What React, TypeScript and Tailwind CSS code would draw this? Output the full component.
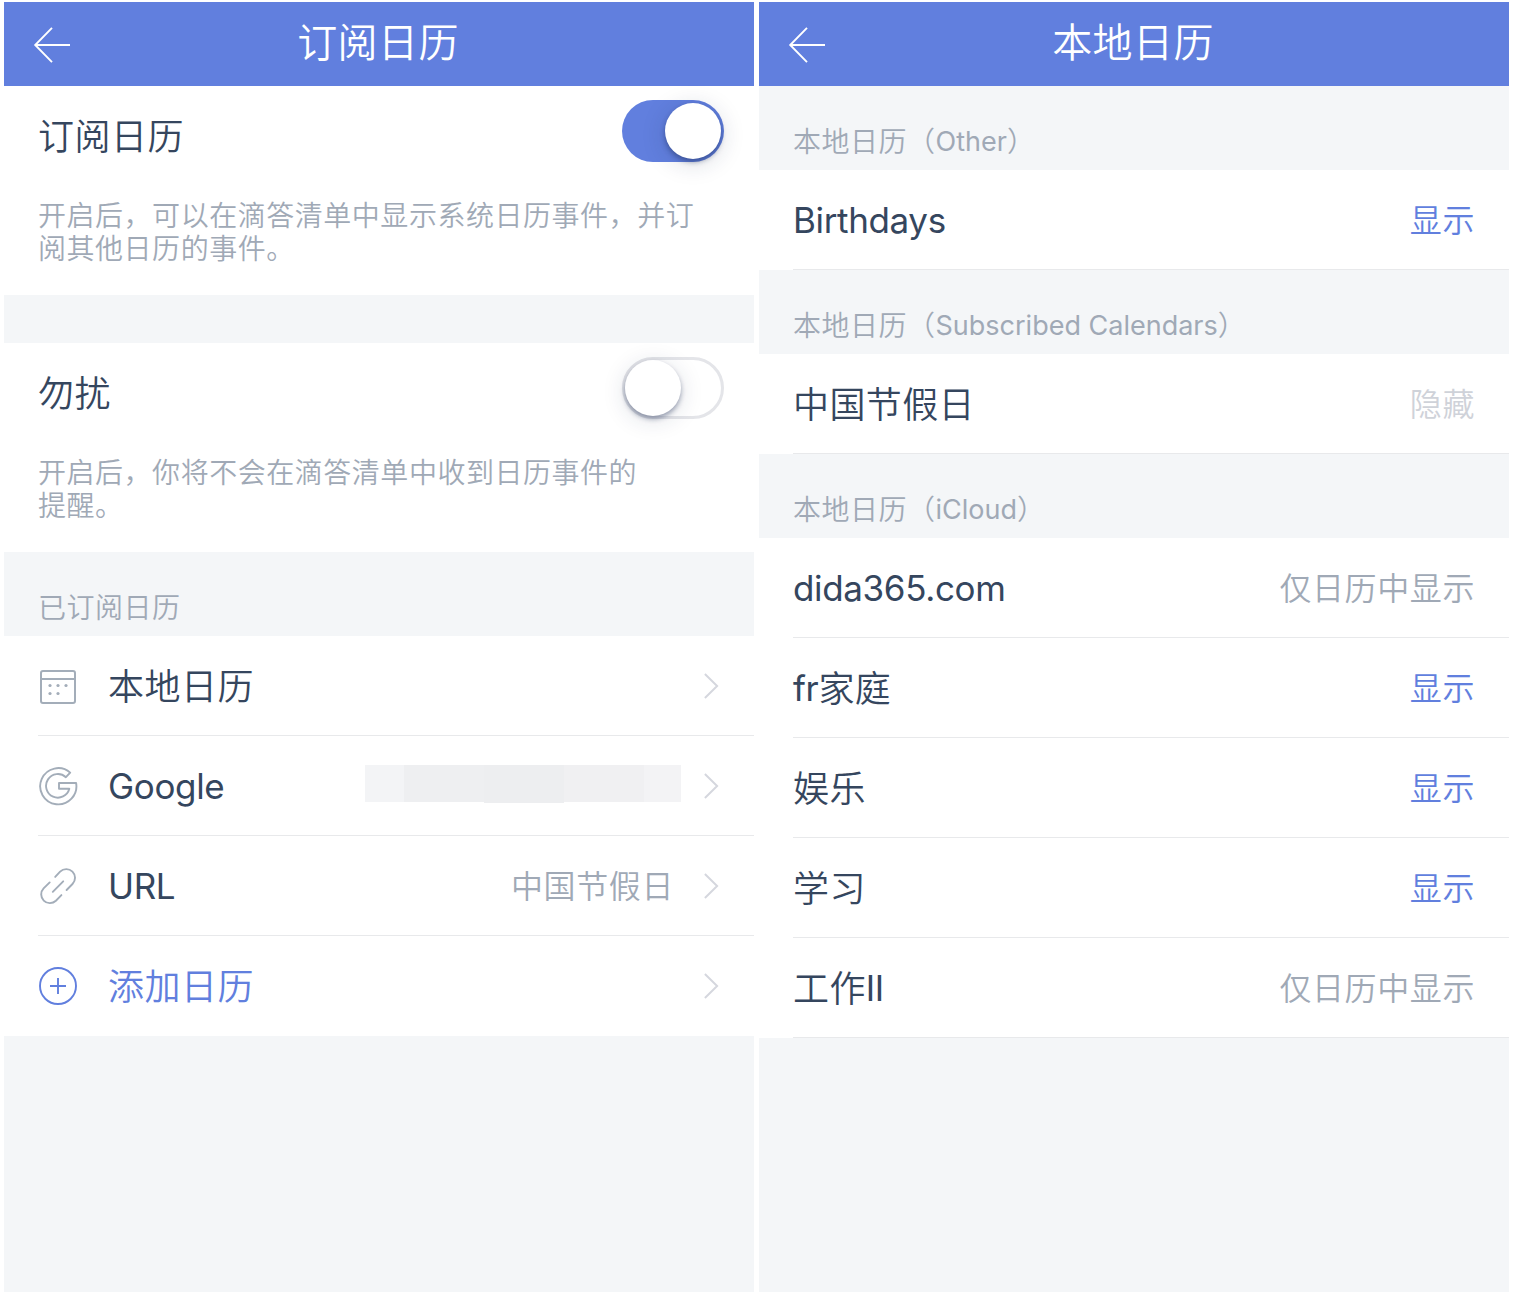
import type { ReactNode } from "react";

function BackArrow() {
  return (
    <svg className="block h-[38px] w-[38px]" viewBox="0 0 38 38" fill="none" stroke="#fff" strokeWidth="1.9">
      <path d="M19 1.8 2.2 19 19 36.2M2 19H37" />
    </svg>
  );
}

function Header({ title }: { title: string }) {
  return (
    <header className="grid h-[84px] shrink-0 grid-cols-[72px_1fr_72px] items-center bg-[#617fde] pl-[29px] pr-[31px] text-white">
      <div className="pt-[2px]">
        <BackArrow />
      </div>
      <h1 className="pb-[2px] text-center text-[40px] leading-[60px] tracking-[0.4px] font-[350]">{title}</h1>
    </header>
  );
}

function Toggle({ on }: { on: boolean }) {
  return on ? (
    <div className="flex h-[62px] w-[102px] justify-end rounded-full bg-[#617fde] p-[3px]">
      <div className="size-14 rounded-full bg-white shadow-[0_3px_5px_rgba(25,40,80,0.42),0_4px_24px_rgba(25,40,80,0.18)]" />
    </div>
  ) : (
    <div className="flex h-[62px] w-[102px] rounded-full border-[3px] border-[#e4e5e9] bg-white">
      <div className="size-14 rounded-full bg-white shadow-[0_3px_5px_rgba(25,40,80,0.4),0_4px_24px_rgba(25,40,80,0.14)]" />
    </div>
  );
}

function ToggleSection({ title, on, lines }: { title: string; on: boolean; lines: string[] }) {
  return (
    <section className="h-[209px] bg-white pl-[34px] pr-[30px]">
      <div className="flex h-[100px] items-start justify-between">
        <h2 className="pt-[24px] text-[36px] leading-[54px] tracking-[0.5px] text-[#35465e]">{title}</h2>
        <div className="pt-[14px]">
          <Toggle on={on} />
        </div>
      </div>
      <p className="pt-[14px] text-[28px] leading-[33px] tracking-[0.53px] text-[#a0a9b6]">
        {lines.map((line) => (
          <span key={line} className="block whitespace-nowrap">
            {line}
          </span>
        ))}
      </p>
    </section>
  );
}

/* Latin runs are slightly smaller and tighter than the Chinese text around them. */
function Latin({ children }: { children: ReactNode }) {
  return <span className="align-[1px] text-[35px] font-normal leading-none tracking-[-0.35px]">{children}</span>;
}

function GroupTitle({ children }: { children: ReactNode }) {
  return (
    <div className="h-[84px] bg-[#f4f6f8] pl-[34px] pt-[35px] text-[28px] leading-[42px] tracking-[0.5px] text-[#a0a9b6]">
      {children}
    </div>
  );
}

function LocalGroupTitle({ account }: { account: string }) {
  return (
    <GroupTitle>
      本地日历（<span className="align-[1px] text-[27px] font-normal leading-none tracking-normal">{account}</span>）
    </GroupTitle>
  );
}

function Chevron() {
  return (
    <svg className="block h-[28px] w-[16px]" viewBox="0 0 16 28" fill="none" stroke="#d5d7de" strokeWidth="2">
      <path d="M0.9 2 13.1 14 0.9 26" />
    </svg>
  );
}

function CalendarIcon() {
  return (
    <svg className="block size-10" viewBox="0 0 40 40" fill="none" stroke="#a3adb9" strokeWidth="2">
      <rect x="3" y="5" width="34" height="32" rx="2" />
      <path d="M3 13h34" />
      <g fill="#a3adb9" stroke="none">
        <circle cx="12" cy="19.5" r="1.6" />
        <circle cx="20" cy="19.5" r="1.6" />
        <circle cx="28" cy="19.5" r="1.6" />
        <circle cx="12" cy="27.5" r="1.6" />
        <circle cx="20" cy="27.5" r="1.6" />
      </g>
    </svg>
  );
}

function GoogleIcon() {
  return (
    <svg className="block size-10" viewBox="0 0 40 40" fill="none" stroke="#a3adb9" strokeWidth="1.9" strokeLinejoin="round">
      <path d="M32.2 6.6A18.1 18.1 0 1 0 38.1 17H21v5.8h10.3A11.8 11.8 0 1 1 27.9 11.2Z" />
    </svg>
  );
}

function LinkIcon() {
  return (
    <svg className="block size-10" viewBox="0 0 40 40" fill="none" stroke="#a3adb9" strokeWidth="1.9" strokeLinecap="round">
      <path d="M17.2 10.9 22.1 5.7A8.7 8.7 0 0 1 34.5 18L28.6 24" />
      <path d="M11.7 16.4 5.6 22.4A8.7 8.7 0 0 0 17.9 34.7L23.4 29.1" />
      <path d="M14.8 25.8 25.2 15.3" />
    </svg>
  );
}

function PlusIcon() {
  return (
    <svg className="block size-10" viewBox="0 0 40 40" fill="none" stroke="#617fde" strokeWidth="1.9">
      <circle cx="20" cy="20" r="18" />
      <path d="M12 20h16M20 12v16" />
    </svg>
  );
}

function MaskedAccount() {
  return (
    <div className="mb-[4px] mr-[23px] flex h-[38px] items-start">
      <div className="h-[37px] w-[39px] bg-[#f3f4f6]" />
      <div className="h-[37px] w-[80px] bg-[#eeeff1]" />
      <div className="h-[38px] w-[80px] bg-[#edeef0]" />
      <div className="h-[37px] w-[80px] bg-[#f0f0f2]" />
      <div className="h-[37px] w-[37px] bg-[#f3f3f5]" />
    </div>
  );
}

type SourceRow = { icon: ReactNode; name: ReactNode; detail?: ReactNode; accent?: boolean; last?: boolean };

function Source({ icon, name, detail, accent, last }: SourceRow) {
  return (
    <li className="h-[100px] bg-white pl-[34px]">
      <div className={`flex h-full items-center pr-[34px] ${last ? "" : "border-b border-[#e8e9eb]"}`}>
        <div className={last ? "" : "pt-px"}>{icon}</div>
        <span
          className={`ml-[30px] flex-1 whitespace-nowrap pt-[2px] text-[36px] leading-[54px] tracking-[0.5px] ${
            accent ? "text-[#617fde]" : "text-[#35465e]"
          }`}
        >
          {name}
        </span>
        {detail}
        <Chevron />
      </div>
    </li>
  );
}

type Visibility = "show" | "hidden" | "calendar";

function Status({ value }: { value: Visibility }) {
  if (value === "show") return <span className="text-[#617fde]">显示</span>;
  if (value === "hidden") return <span className="text-[#cfd2d9]">隐藏</span>;
  return <span className="text-[#a0a9b6]">仅日历中显示</span>;
}

function CalendarRow({ name, value }: { name: ReactNode; value: Visibility }) {
  return (
    <li className="h-[100px] bg-white pl-[34px]">
      <div className="flex h-full items-center justify-between border-b border-[#e8e9eb] pr-[34px] pt-[2px]">
        <span className="text-[36px] leading-[54px] tracking-[0.4px] text-[#35465e]">{name}</span>
        <span className="text-[32px] leading-[48px] tracking-[0.6px]">
          <Status value={value} />
        </span>
      </div>
    </li>
  );
}

export default function App() {
  return (
    <div className="flex h-[1298px] w-[1515px] gap-[5px] bg-white pl-[4px] pt-[2px] font-['Inter','Noto_Sans_CJK_SC',sans-serif] font-[350]">
      <main className="flex h-[1290px] w-[750px] flex-col bg-[#f4f6f8]">
        <Header title="订阅日历" />
        <ToggleSection
          title="订阅日历"
          on
          lines={["开启后，可以在滴答清单中显示系统日历事件，并订", "阅其他日历的事件。"]}
        />
        <div className="h-12" />
        <ToggleSection title="勿扰" on={false} lines={["开启后，你将不会在滴答清单中收到日历事件的", "提醒。"]} />
        <GroupTitle>已订阅日历</GroupTitle>
        <ul>
          <Source icon={<CalendarIcon />} name="本地日历" />
          <Source icon={<GoogleIcon />} name={<Latin>Google</Latin>} detail={<MaskedAccount />} />
          <Source
            icon={<LinkIcon />}
            name={<Latin>URL</Latin>}
            detail={
              <span className="mr-[30px] pt-[2px] text-[32px] leading-[48px] tracking-[0.6px] text-[#a0a9b6]">
                中国节假日
              </span>
            }
          />
          <Source icon={<PlusIcon />} name="添加日历" accent last />
        </ul>
      </main>

      <main className="flex h-[1290px] w-[750px] flex-col bg-[#f4f6f8]">
        <Header title="本地日历" />
        <LocalGroupTitle account="Other" />
        <ul>
          <CalendarRow name={<Latin>Birthdays</Latin>} value="show" />
        </ul>
        <LocalGroupTitle account="Subscribed Calendars" />
        <ul>
          <CalendarRow name="中国节假日" value="hidden" />
        </ul>
        <LocalGroupTitle account="iCloud" />
        <ul>
          <CalendarRow name={<Latin>dida365.com</Latin>} value="calendar" />
          <CalendarRow name={<><Latin>fr</Latin>家庭</>} value="show" />
          <CalendarRow name="娱乐" value="show" />
          <CalendarRow name="学习" value="show" />
          <CalendarRow name={<>工作<Latin>II</Latin></>} value="calendar" />
        </ul>
      </main>
    </div>
  );
}
